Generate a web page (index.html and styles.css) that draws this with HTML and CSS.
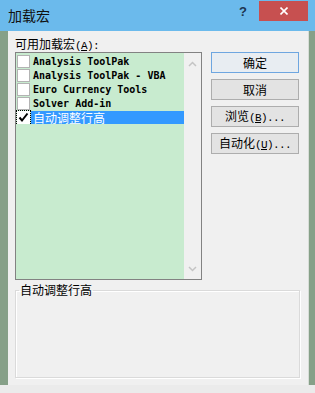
FILE: index.html
```html
<!DOCTYPE html>
<html lang="zh-CN">
<head>
  <meta charset="UTF-8">
  <meta name="viewport" content="width=device-width, initial-scale=1.0">
  <title>加载宏</title>
  <link rel="stylesheet" href="styles.css">
</head>
<body>
  <div class="window">
    <div class="titlebar">
      <span class="title">加载宏</span>
      <span class="help">?</span>
      <span class="close">
        <svg width="8" height="8" viewBox="0 0 8 8"><path d="M0.5 0.5 L7.5 7.5 M7.5 0.5 L0.5 7.5" stroke="#fff" stroke-width="1.6"/></svg>
      </span>
    </div>

    <div class="frame">
      <div class="edge edge-left"></div>

      <div class="dialog">
        <div class="caption">可用加载宏<span class="mn">(<u>A</u>):</span></div>

        <div class="main">
          <div class="listbox">
            <ul class="items">
              <li class="item"><span class="box-wrap"><span class="box"></span></span><span class="name">Analysis ToolPak</span></li>
              <li class="item"><span class="box-wrap"><span class="box"></span></span><span class="name">Analysis ToolPak - VBA</span></li>
              <li class="item"><span class="box-wrap"><span class="box"></span></span><span class="name">Euro Currency Tools</span></li>
              <li class="item"><span class="box-wrap"><span class="box"></span></span><span class="name">Solver Add-in</span></li>
              <li class="item selected">
                <span class="box-wrap focus">
                  <span class="box checked">
                    <svg width="11" height="11" viewBox="0 0 11 11"><path d="M1.5 5.5 L4 8.5 L9.5 1.5" fill="none" stroke="#000" stroke-width="2"/></svg>
                  </span>
                </span>
                <span class="name cjk">自动调整行高</span>
              </li>
            </ul>
            <div class="scrollbar">
              <svg width="9" height="6" viewBox="0 0 9 6"><path d="M1 5 L4.5 1.5 L8 5" fill="none" stroke="#c4c4c4" stroke-width="1.5"/></svg>
              <svg width="9" height="6" viewBox="0 0 9 6"><path d="M1 1 L4.5 4.5 L8 1" fill="none" stroke="#c4c4c4" stroke-width="1.5"/></svg>
            </div>
          </div>

          <div class="buttons">
            <button class="btn default">确定</button>
            <button class="btn">取消</button>
            <button class="btn">浏览<span class="mn">(<u>B</u>)...</span></button>
            <button class="btn">自动化<span class="mn">(<u>U</u>)...</span></button>
          </div>
        </div>

        <fieldset class="desc">
          <legend>自动调整行高</legend>
        </fieldset>
      </div>

      <div class="edge edge-right"></div>
    </div>

    <div class="footer"></div>
  </div>
</body>
</html>
```

FILE: styles.css
```css
body {
  margin: 0;
  padding: 0;
  font-family: "Noto Sans CJK SC", "Noto Sans", sans-serif;
  font-size: 12px;
  color: #000;
  background-color: #ebebeb;
}

.window {
  width: 315px;
  height: 393px;
  display: flex;
  flex-direction: column;
}

/* title bar */
.titlebar {
  height: 31px;
  flex-shrink: 0;
  background-color: #6bbaec;
  display: flex;
  align-items: flex-start;
}

.title {
  flex: 1;
  padding-left: 8px;
  padding-top: 6px;
  font-size: 14px;
  line-height: 18px;
  color: #111;
}

.help {
  margin-top: 5px;
  margin-right: 12px;
  font-family: "Liberation Sans", sans-serif;
  font-weight: bold;
  font-size: 13px;
  line-height: 14px;
  color: #1d3550;
}

.close {
  width: 49px;
  height: 20px;
  margin-top: 1px;
  margin-right: 7px;
  background-color: #c75050;
  display: flex;
  justify-content: center;
  align-items: center;
}

/* body frame */
.frame {
  height: 354px;
  flex-shrink: 0;
  display: flex;
}

.edge {
  background-color: #86a088;
}

.edge-left {
  width: 8px;
}

.edge-right {
  width: 7px;
  border-left: 1px solid #d7ddd7;
  box-sizing: border-box;
}

.dialog {
  flex: 1;
  background-color: #f0f0f0;
  padding: 5px 8px 0 7px;
  display: flex;
  flex-direction: column;
}

.footer {
  flex: 1;
  background-color: #ebebeb;
}

.mn {
  font-family: "Liberation Mono", monospace;
  font-size: 11px;
  letter-spacing: -0.6px;
}

.caption {
  height: 16px;
  line-height: 16px;
}

.main {
  display: flex;
  gap: 9px;
}

/* list of add-ins */
.listbox {
  width: 187px;
  height: 228px;
  box-sizing: border-box;
  border: 1px solid #828282;
  display: flex;
}

.items {
  flex: 1;
  margin: 0;
  padding: 1px 0 0 0;
  list-style: none;
  background-color: #c8ebcf;
}

.item {
  height: 14px;
  display: flex;
  align-items: center;
}

.box-wrap {
  width: 15px;
  height: 14px;
  box-sizing: border-box;
  display: flex;
  align-items: center;
  justify-content: center;
}

.box-wrap.focus {
  border: 1px dotted #000;
}

.box {
  width: 13px;
  height: 13px;
  box-sizing: border-box;
  border: 1px solid #b3b3b3;
  background-color: #fff;
  display: flex;
  align-items: center;
  justify-content: center;
}

.box.checked {
  border-color: #fff;
}

.name {
  padding-left: 2px;
  font-family: "DejaVu Sans Mono", monospace;
  font-weight: bold;
  font-size: 10px;
  line-height: 13px;
  white-space: nowrap;
}

.name.cjk {
  flex: 1;
  height: 13px;
  font-family: "Noto Sans CJK SC", sans-serif;
  font-weight: normal;
  font-size: 12px;
  color: #fff;
  background-color: #3399ff;
}

.scrollbar {
  width: 17px;
  background-color: #f0f0f0;
  display: flex;
  flex-direction: column;
  justify-content: space-between;
  align-items: center;
  padding: 8px 0 7px;
}

/* buttons */
.buttons {
  width: 88px;
  display: flex;
  flex-direction: column;
  gap: 6px;
}

.btn {
  height: 21px;
  padding: 0;
  border: 1px solid #adadad;
  background-color: #e3e3e3;
  font-family: "Noto Sans CJK SC", sans-serif;
  font-size: 12px;
  line-height: 17px;
  color: #000;
}

.btn.default {
  border-color: #6ea6e0;
  background-color: #e8edf2;
}

/* description box */
.desc {
  margin: 3px 0 0 0;
  padding: 0;
  height: 95px;
  box-sizing: border-box;
  border: 1px solid #dadada;
  box-shadow: inset 1px 1px 0 #fff, 1px 1px 0 #fff;
}

.desc legend {
  margin-left: 3px;
  padding: 0 1px;
  font-size: 12px;
  line-height: 14px;
}
```
